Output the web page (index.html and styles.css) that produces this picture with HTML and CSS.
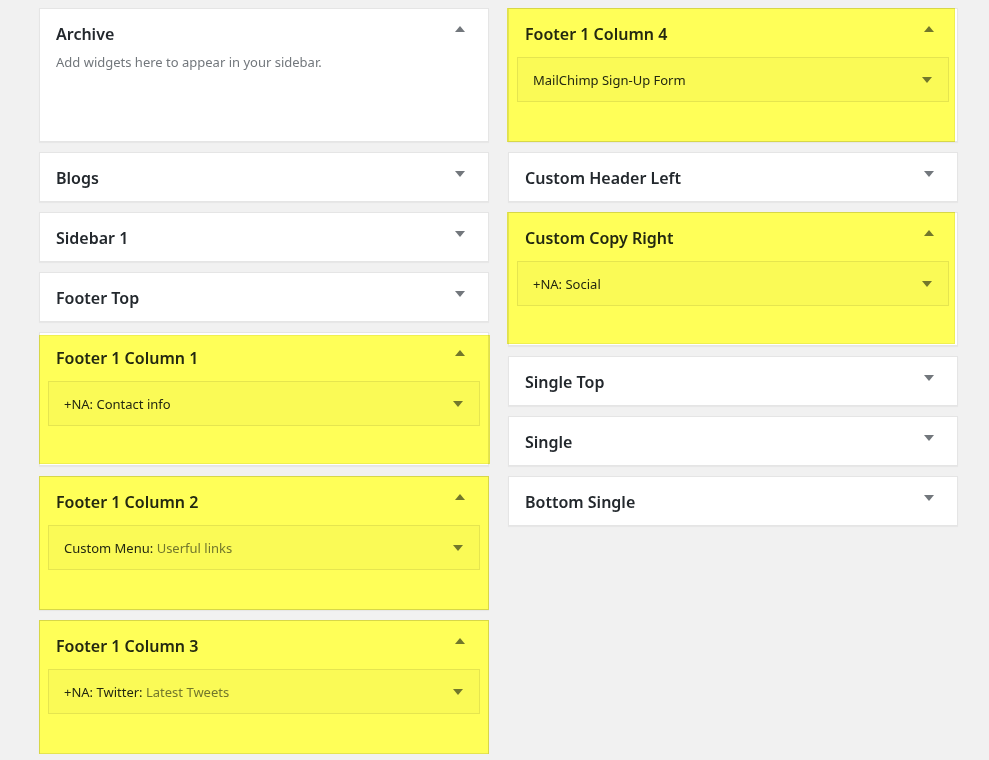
FILE: index.html
```html
<!DOCTYPE html>
<html>
<head>
<meta charset="utf-8">
<link rel="stylesheet" href="styles.css">
</head>
<body>
<div class="page">
  <div class="col">
    <div class="area open">
      <div class="area-head"><h2>Archive</h2><span class="arrow up"></span></div>
      <div class="area-body"><p class="desc">Add widgets here to appear in your sidebar.</p></div>
    </div>
    <div class="area"><div class="area-head"><h2>Blogs</h2><span class="arrow down"></span></div></div>
    <div class="area"><div class="area-head"><h2>Sidebar 1</h2><span class="arrow down"></span></div></div>
    <div class="area"><div class="area-head"><h2>Footer Top</h2><span class="arrow down"></span></div></div>
    <div class="area open hl hl-c1">
      <div class="area-head"><h2>Footer 1 Column 1</h2><span class="arrow up"></span></div>
      <div class="area-body"><div class="widget"><span class="wt">+NA: Contact info</span><span class="arrow down"></span></div></div>
    </div>
    <div class="area open hl hl-c2">
      <div class="area-head"><h2>Footer 1 Column 2</h2><span class="arrow up"></span></div>
      <div class="area-body"><div class="widget"><span class="wt">Custom Menu:<span class="sub"> Userful links</span></span><span class="arrow down"></span></div></div>
    </div>
    <div class="area open hl hl-c3">
      <div class="area-head"><h2>Footer 1 Column 3</h2><span class="arrow up"></span></div>
      <div class="area-body"><div class="widget"><span class="wt">+NA: Twitter:<span class="sub"> Latest Tweets</span></span><span class="arrow down"></span></div></div>
    </div>
  </div>
  <div class="col">
    <div class="area open hl hl-c4">
      <div class="area-head"><h2>Footer 1 Column 4</h2><span class="arrow up"></span></div>
      <div class="area-body"><div class="widget"><span class="wt">MailChimp Sign-Up Form</span><span class="arrow down"></span></div></div>
    </div>
    <div class="area"><div class="area-head"><h2>Custom Header Left</h2><span class="arrow down"></span></div></div>
    <div class="area open hl hl-cr">
      <div class="area-head"><h2>Custom Copy Right</h2><span class="arrow up"></span></div>
      <div class="area-body"><div class="widget"><span class="wt">+NA: Social</span><span class="arrow down"></span></div></div>
    </div>
    <div class="area"><div class="area-head"><h2>Single Top</h2><span class="arrow down"></span></div></div>
    <div class="area"><div class="area-head"><h2>Single</h2><span class="arrow down"></span></div></div>
    <div class="area"><div class="area-head"><h2>Bottom Single</h2><span class="arrow down"></span></div></div>
  </div>
</div>
</body>
</html>
```

FILE: styles.css
```css
html, body {
  margin: 0;
  padding: 0;
  background: #f1f1f1;
  font-family: "Noto Sans", "Open Sans", sans-serif;
  color: #23282d;
  overflow: hidden;
}
.page {
  display: flex;
  gap: 19px;
  padding: 8px 0 0 39px;
  align-items: flex-start;
}
.col {
  width: 450px;
  display: flex;
  flex-direction: column;
  gap: 10px;
}
.area {
  position: relative;
  background: #fff;
  border: 1px solid #e5e5e5;
  box-shadow: 0 1px 1px rgba(0,0,0,0.04);
}
.area-head {
  height: 48px;
  box-sizing: border-box;
  display: flex;
  align-items: center;
  justify-content: space-between;
  padding: 2px 23px 0 16px;
}
.area.open .area-head {
  align-items: flex-start;
  padding-top: 14px;
}
.area h2 {
  margin: 0;
  font-size: 16px;
  font-weight: 600;
  line-height: 22px;
  color: #23282d;
}
.area-body {
  display: flow-root;
  height: 84px;
  padding: 0 8px;
}
.desc {
  margin: -4px 0 0 8px;
  font-size: 13px;
  color: #72777c;
  line-height: 18px;
}
.arrow {
  width: 0;
  height: 0;
  border-left: 5px solid transparent;
  border-right: 5px solid transparent;
}
.arrow.up { border-bottom: 6px solid #72777c; }
.arrow.down { border-top: 6px solid #72777c; }
.area.open .area-head .arrow { margin-top: 3px; }
.area:not(.open) .area-head .arrow { margin-top: -9px; }

.widget {
  height: 45px;
  box-sizing: border-box;
  border: 1px solid #e5e5e5;
  background: #fafafa;
  display: flex;
  align-items: center;
  justify-content: space-between;
  padding: 1px 16px 0 15px;
}
.wt {
  font-size: 13px;
  color: #23282d;
}
.wt .sub { color: #72777c; }

/* yellow marker highlight painted over the screenshot */
.area.hl::after {
  content: "";
  position: absolute;
  top: -1px;
  left: -1px;
  right: -1px;
  bottom: -1px;
  background: #ffff58;
  border: 1px solid #f0f050;
  mix-blend-mode: multiply;
  pointer-events: none;
  box-sizing: border-box;
}
.hl-c1::after { top: 2px !important; right: -2px !important; bottom: 1px !important; }
.hl-c3::after { bottom: -12px !important; }
.hl-c4::after { left: -2px !important; right: 2px !important; }
.hl-cr::after { left: -2px !important; right: 2px !important; bottom: 1px !important; }
```
